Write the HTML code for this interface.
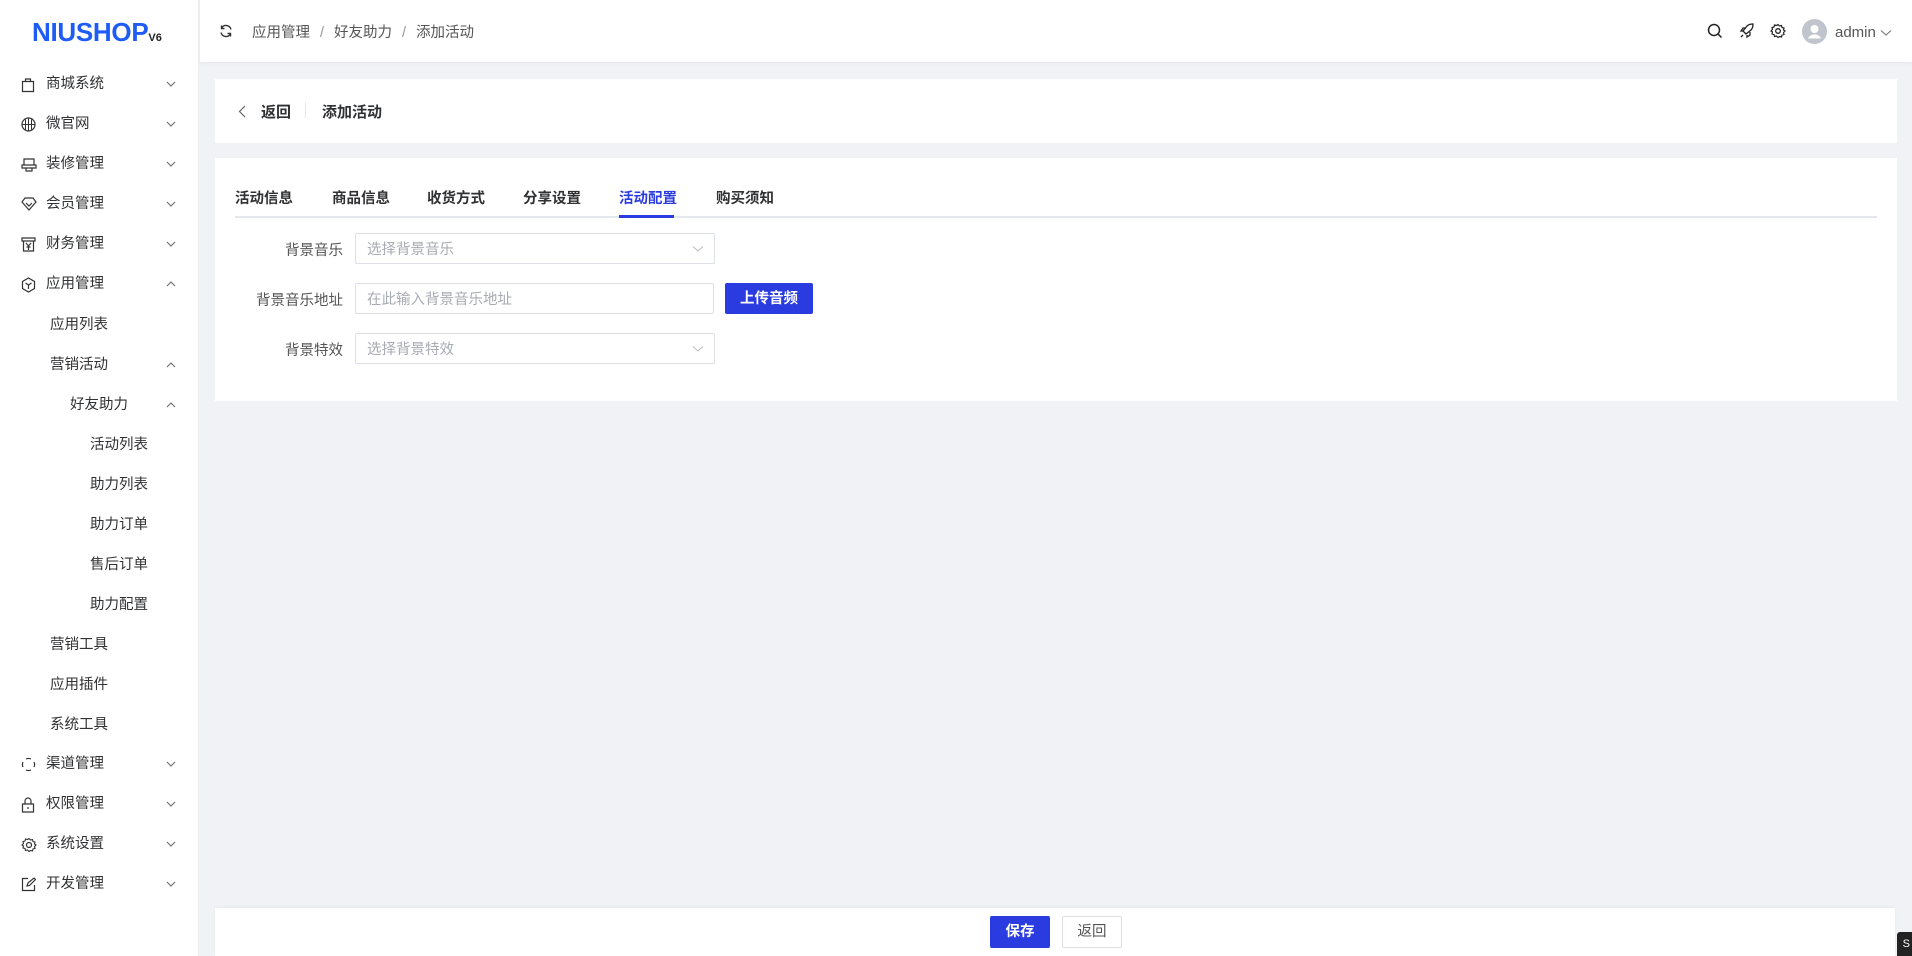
<!DOCTYPE html>
<html><head><meta charset="utf-8">
<style>
*{box-sizing:border-box;margin:0;padding:0}
body{width:1912px;height:956px;overflow:hidden;background:#f0f2f5;font-family:"Liberation Sans","Noto Sans CJK SC",sans-serif;color:#303133;position:relative}
.side{position:absolute;left:0;top:0;width:199px;height:956px;background:#fff;border-right:1px solid #eceef2}
.logo{position:absolute;left:32px;top:17px;font-size:26px;font-weight:bold;color:#1f5cf5;letter-spacing:-0.3px;font-family:"Liberation Sans",sans-serif}
.logo small{font-size:11px;color:#222;letter-spacing:0}
.it{position:absolute;left:0;width:199px;height:40px;line-height:40px;font-size:14.5px;color:#303133}
.it svg.ic{position:absolute;left:21px;top:13px}
.it .ch{position:absolute;left:166px;top:16px}
.hdr{position:absolute;left:200px;top:0;right:0;height:62px;background:#fff;box-shadow:0 1px 4px rgba(0,0,0,.05)}
.bc{position:absolute;left:252px;top:2px;line-height:62px;font-size:14.5px;color:#555}
.bc span{color:#999;margin:0 10px}
.card{position:absolute;left:215px;right:15px;background:#fff}
.tab{position:absolute;top:187px;font-size:14.5px;font-weight:600;color:#303133}
.lbl{position:absolute;right:calc(1912px - 343px);font-size:14.5px;color:#555;text-align:right}
.inp{position:absolute;left:355px;width:360px;height:31px;border:1px solid #dcdfe6;border-radius:2px;font-size:14.5px;color:#a8abb2;padding-left:11px;padding-top:2px;line-height:29px}
.inp .ch{position:absolute;right:10px;top:11px}
.btn{position:absolute;font-size:14.5px;text-align:center;border-radius:2px}
</style></head><body>
<div class="side">
<div class="logo">NIUSHOP<small>V6</small></div>
<div class="it" style="top:64px"><svg class="ic" width="14" height="16" viewBox="0 0 14 16"><path d="M1.5 4.5h11v10h-11z M4.5 4.5V2h5v2.5" fill="none" stroke="#333" stroke-width="1.2"/></svg><span style="margin-left:46px">商城系统</span><svg class="ch" width="10" height="8"><path d="M1 2l4 4 4-4" fill="none" stroke="#666"/></svg></div>
<div class="it" style="top:104px"><svg class="ic" width="15" height="15" viewBox="0 0 15 15"><circle cx="7.5" cy="7.5" r="6.5" fill="none" stroke="#333" stroke-width="1.2"/><path d="M1 7.5h13M7.5 1v13M4.5 2.5v10M10.5 2.5v10" fill="none" stroke="#333"/></svg><span style="margin-left:46px">微官网</span><svg class="ch" width="10" height="8"><path d="M1 2l4 4 4-4" fill="none" stroke="#666"/></svg></div>
<div class="it" style="top:144px"><svg class="ic" width="16" height="15" viewBox="0 0 16 15"><path d="M3 2h10v6H3z M1 8h14v3H1z M5 11v3h6v-3" fill="none" stroke="#333" stroke-width="1.2"/></svg><span style="margin-left:46px">装修管理</span><svg class="ch" width="10" height="8"><path d="M1 2l4 4 4-4" fill="none" stroke="#666"/></svg></div>
<div class="it" style="top:184px"><svg class="ic" width="16" height="14" viewBox="0 0 16 14"><path d="M4 1h8l3 4-7 8-7-8z M5 6l3 3 3-3" fill="none" stroke="#333" stroke-width="1.2"/></svg><span style="margin-left:46px">会员管理</span><svg class="ch" width="10" height="8"><path d="M1 2l4 4 4-4" fill="none" stroke="#666"/></svg></div>
<div class="it" style="top:224px"><svg class="ic" width="15" height="15" viewBox="0 0 15 15"><path d="M1 1h13v3H1z M2.5 4v10h10V4 M5 6l2.5 3 2.5-3 M7.5 9v4 M5.5 10h4" fill="none" stroke="#333" stroke-width="1.2"/></svg><span style="margin-left:46px">财务管理</span><svg class="ch" width="10" height="8"><path d="M1 2l4 4 4-4" fill="none" stroke="#666"/></svg></div>
<div class="it" style="top:264px"><svg class="ic" width="15" height="16" viewBox="0 0 15 16"><path d="M7.5 1l6 3.5v7l-6 3.5-6-3.5v-7z M4.5 6l3 2 3-2 M7.5 8v4" fill="none" stroke="#333" stroke-width="1.2"/></svg><span style="margin-left:46px">应用管理</span><svg class="ch" width="10" height="8"><path d="M1 6l4-4 4 4" fill="none" stroke="#666"/></svg></div>
<div class="it" style="top:305px"><span style="margin-left:50px">应用列表</span></div>
<div class="it" style="top:345px"><span style="margin-left:50px">营销活动</span><svg class="ch" width="10" height="8"><path d="M1 6l4-4 4 4" fill="none" stroke="#666"/></svg></div>
<div class="it" style="top:385px"><span style="margin-left:70px">好友助力</span><svg class="ch" width="10" height="8"><path d="M1 6l4-4 4 4" fill="none" stroke="#666"/></svg></div>
<div class="it" style="top:425px"><span style="margin-left:90px">活动列表</span></div>
<div class="it" style="top:465px"><span style="margin-left:90px">助力列表</span></div>
<div class="it" style="top:505px"><span style="margin-left:90px">助力订单</span></div>
<div class="it" style="top:545px"><span style="margin-left:90px">售后订单</span></div>
<div class="it" style="top:585px"><span style="margin-left:90px">助力配置</span></div>
<div class="it" style="top:625px"><span style="margin-left:50px">营销工具</span></div>
<div class="it" style="top:665px"><span style="margin-left:50px">应用插件</span></div>
<div class="it" style="top:705px"><span style="margin-left:50px">系统工具</span></div>
<div class="it" style="top:744px"><svg class="ic" width="15" height="15" viewBox="0 0 15 15"><path d="M5 2a6 6 0 0 1 5 0 M13 5a6 6 0 0 1 0 5 M10 13a6 6 0 0 1-5 0 M2 10a6 6 0 0 1 0-5" fill="none" stroke="#333" stroke-width="1.2"/></svg><span style="margin-left:46px">渠道管理</span><svg class="ch" width="10" height="8"><path d="M1 2l4 4 4-4" fill="none" stroke="#666"/></svg></div>
<div class="it" style="top:784px"><svg class="ic" width="14" height="16" viewBox="0 0 14 16"><path d="M1.5 7h11v8h-11z M4 7V4a3 3 0 0 1 6 0v3 M7 10v2" fill="none" stroke="#333" stroke-width="1.2"/></svg><span style="margin-left:46px">权限管理</span><svg class="ch" width="10" height="8"><path d="M1 2l4 4 4-4" fill="none" stroke="#666"/></svg></div>
<div class="it" style="top:824px"><svg class="ic" width="16" height="16" viewBox="0 0 16 16"><circle cx="8" cy="8" r="2.5" fill="none" stroke="#333" stroke-width="1.2"/><path d="M8 1.5l1.5 1.5 2-.5.5 2 2 .5-.5 2 1.5 1-1.5 1.5.5 2-2 .5-.5 2-2-.5L8 14.5 6.5 13l-2 .5-.5-2-2-.5.5-2L1 8l1.5-1.5-.5-2 2-.5.5-2 2 .5z" fill="none" stroke="#333" stroke-width="1.1"/></svg><span style="margin-left:46px">系统设置</span><svg class="ch" width="10" height="8"><path d="M1 2l4 4 4-4" fill="none" stroke="#666"/></svg></div>
<div class="it" style="top:864px"><svg class="ic" width="15" height="15" viewBox="0 0 15 15"><path d="M7 1.5H1.5v12h12V8 M6 9l1-3 6-5 1.5 1.5-6 6z" fill="none" stroke="#333" stroke-width="1.2"/></svg><span style="margin-left:46px">开发管理</span><svg class="ch" width="10" height="8"><path d="M1 2l4 4 4-4" fill="none" stroke="#666"/></svg></div>
</div>
<div class="hdr">
<svg style="position:absolute;left:19px;top:24px" width="14" height="14" viewBox="0 0 14 14"><path d="M12 5.5A5.2 5.2 0 0 0 2.5 4 M2 8.5A5.2 5.2 0 0 0 11.5 10 M2.5 1.5V4.5H5.5 M11.5 12.5V9.5H8.5" fill="none" stroke="#333" stroke-width="1.4"/></svg>
</div>
<div class="bc">应用管理<span>/</span>好友助力<span>/</span>添加活动</div>
<svg style="position:absolute;left:1707px;top:23px" width="16" height="16" viewBox="0 0 16 16"><circle cx="7" cy="7" r="5.5" fill="none" stroke="#222" stroke-width="1.5"/><path d="M11 11l3.5 3.5" stroke="#222" stroke-width="1.5"/></svg>
<svg style="position:absolute;left:1739px;top:23px" width="16" height="16" viewBox="0 0 16 16"><path d="M6 10l-2-2 4-5c2-2 5-2 6-2 0 1 0 4-2 6l-5 4z M4 8l-2 0 2-3h3 M8 12v2l3-2v-3 M4 12l-2 2" fill="none" stroke="#222" stroke-width="1.3"/></svg>
<svg style="position:absolute;left:1770px;top:23px" width="16" height="16" viewBox="0 0 16 16"><circle cx="8" cy="8" r="2.3" fill="none" stroke="#222" stroke-width="1.3"/><path d="M8 1.5l1.5 1.5 2-.5.5 2 2 .5-.5 2 1.5 1-1.5 1.5.5 2-2 .5-.5 2-2-.5L8 14.5 6.5 13l-2 .5-.5-2-2-.5.5-2L1 8l1.5-1.5-.5-2 2-.5.5-2 2 .5z" fill="none" stroke="#222" stroke-width="1.2"/></svg>
<svg style="position:absolute;left:1802px;top:19px" width="25" height="25" viewBox="0 0 25 25"><circle cx="12.5" cy="12.5" r="12.5" fill="#c0c4cc"/><circle cx="12.5" cy="10" r="4" fill="#fff"/><path d="M6 19.5c1-3 4-4 6.5-4s5.5 1 6.5 4z" fill="#fff"/></svg>
<div style="position:absolute;left:1835px;top:24px;font-size:15px;color:#555">admin</div>
<svg style="position:absolute;left:1880px;top:29px" width="12" height="8"><path d="M1 1.5l5 4.5 5-4.5" fill="none" stroke="#777" stroke-width="1.1"/></svg>

<div class="card" style="top:79px;height:64px">
<svg style="position:absolute;left:23px;top:26px" width="8" height="13"><path d="M7 1L1.5 6.5 7 12" fill="none" stroke="#666" stroke-width="1.2"/></svg>
<div style="position:absolute;left:46px;top:22px;font-size:15px;font-weight:bold">返回</div>
<div style="position:absolute;left:90px;top:23px;width:1px;height:16px;background:#e4e7ed"></div>
<div style="position:absolute;left:107px;top:22px;font-size:15px;font-weight:bold">添加活动</div>
</div>
<div class="card" style="top:158px;height:243px"></div>
<div class="tab" style="left:235px">活动信息</div>
<div class="tab" style="left:332px">商品信息</div>
<div class="tab" style="left:427px">收货方式</div>
<div class="tab" style="left:523px">分享设置</div>
<div class="tab" style="left:619px;color:#2a3be0">活动配置</div>
<div class="tab" style="left:716px">购买须知</div>
<div style="position:absolute;left:235px;width:1642px;top:216px;height:2px;background:#e4e7ed"></div>
<div style="position:absolute;left:619px;width:55px;top:215px;height:3px;background:#2a3be0"></div>

<div class="lbl" style="top:239px">背景音乐</div>
<div class="inp" style="top:233px">选择背景音乐<svg class="ch" width="12" height="8"><path d="M1 1.5l5 4.5 5-4.5" fill="none" stroke="#bbb"/></svg></div>
<div class="lbl" style="top:289px">背景音乐地址</div>
<div class="inp" style="top:283px;width:359px">在此输入背景音乐地址</div>
<div class="btn" style="left:725px;top:283px;width:88px;height:31px;line-height:33px;background:#2a3be0;color:#fff;font-weight:bold">上传音频</div>
<div class="lbl" style="top:339px">背景特效</div>
<div class="inp" style="top:333px">选择背景特效<svg class="ch" width="12" height="8"><path d="M1 1.5l5 4.5 5-4.5" fill="none" stroke="#bbb"/></svg></div>

<div style="position:absolute;left:215px;right:17px;top:908px;height:48px;background:#fff;box-shadow:0 -1px 4px rgba(0,0,0,.04)"></div>
<div class="btn" style="left:990px;top:916px;width:60px;height:32px;line-height:33px;background:#2a3be0;color:#fff;font-weight:bold">保存</div>
<div class="btn" style="left:1062px;top:916px;width:60px;height:32px;line-height:31px;border:1px solid #dcdfe6;color:#555;background:#fff">返回</div>
<div style="position:absolute;left:1897px;top:932px;width:15px;height:24px;background:#222;border-radius:3px 0 0 0;color:#fff;font-size:11px;line-height:24px;text-align:right;padding-right:2px">S</div>
</body></html>
